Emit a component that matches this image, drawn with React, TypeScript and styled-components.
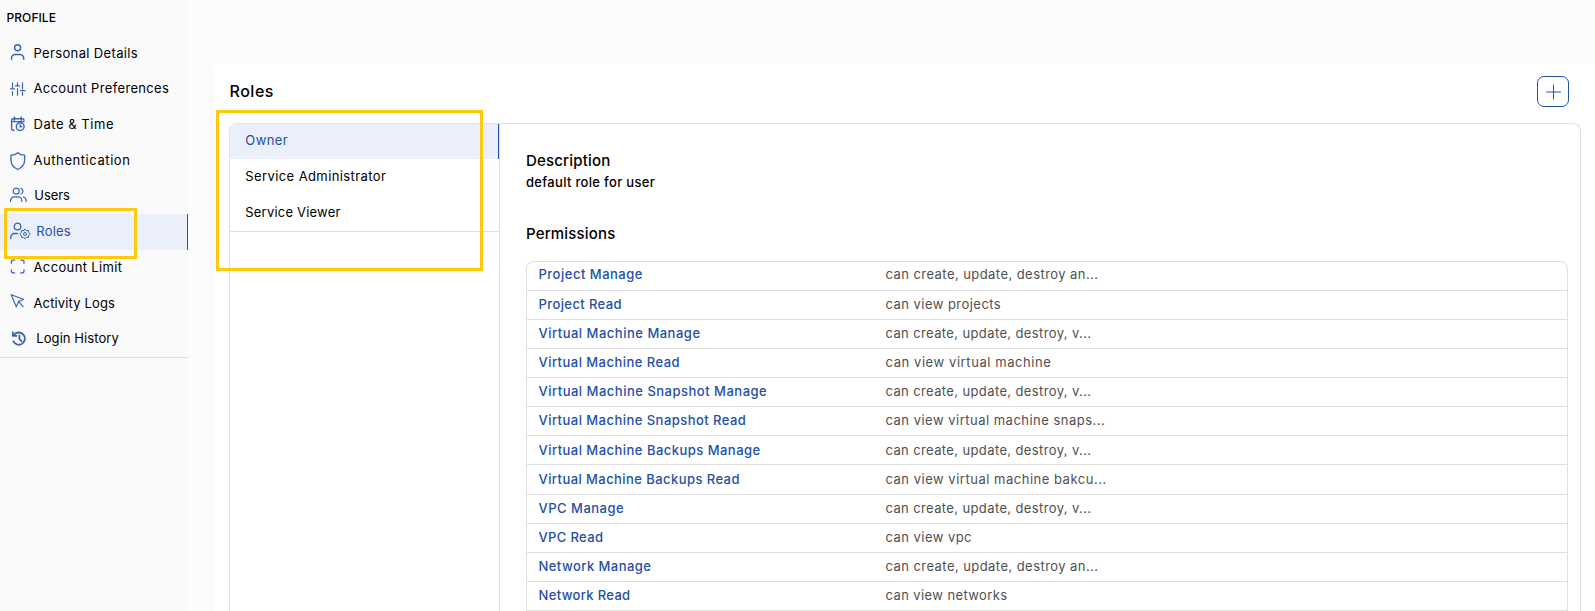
import React from "react";
import styled, { createGlobalStyle, css } from "styled-components";

const BLUE = "#2350a9";
const LINE = "#e0e0e1";
const TINT = "#eaeff9";

const GlobalStyle = createGlobalStyle`
  * { box-sizing: border-box; }
  body {
    margin: 0;
    overflow: hidden;
    background: #fbfcfe;
    color: #000;
    font-family: Inter, "Liberation Sans", sans-serif;
    font-size: 13px;
  }
`;

const Page = styled.div`
  position: relative;
  display: flex;
  height: 611px;
  overflow: hidden;
`;

const Sidebar = styled.nav`
  flex: 0 0 188px;
  background: #fafafa;
`;

const Heading = styled.h2`
  margin: 0;
  height: 35.6px;
  padding-left: 6.5px;
  font-size: 12px;
  font-weight: 500;
  line-height: 35px;
  letter-spacing: 0.07px;
`;

const Menu = styled.div`
  border-bottom: 1px solid ${LINE};
`;

const Label = styled.span<{ $track: number }>`
  white-space: nowrap;
  letter-spacing: ${(p) => p.$track}px;
`;

const MenuItem = styled.a<{ $active?: boolean; $indent: number }>`
  display: flex;
  align-items: center;
  gap: ${(p) => p.$indent}px;
  height: 35.7px;
  padding-left: 9px;
  ${Label} {
    padding-bottom: 1.4px;
  }
  ${(p) =>
    p.$active &&
    css`
      background: ${TINT};
      border-right: 1px solid ${BLUE};
      color: ${BLUE};
    `}
`;

const Icon = styled.svg<{ $weight?: number }>`
  flex: none;
  width: 22px;
  height: 20px;
  overflow: visible;
  fill: none;
  stroke: #3a63b5;
  stroke-width: ${(p) => p.$weight ?? 1.2};
  stroke-linecap: round;
  stroke-linejoin: round;
`;

const Card = styled.main`
  flex: 1;
  display: flex;
  flex-direction: column;
  margin: 64px 0 0 26px;
  padding: 12px 14px 0 15px;
  background: #fff;
  border-top-left-radius: 4px;
`;

const CardHeader = styled.header`
  display: flex;
  justify-content: space-between;
  align-items: center;
  height: 31px;
  margin-bottom: 16px;
  padding-right: 12px;
`;

const Title = styled.h1`
  margin: 0;
  padding: 0 0 2px 0.5px;
  font-size: 16px;
  font-weight: 500;
  letter-spacing: 0.53px;
`;

const AddButton = styled.button`
  display: grid;
  place-items: center;
  width: 32px;
  height: 31px;
  padding: 0;
  background: #fff;
  border: 1px solid ${BLUE};
  border-radius: 7px;
`;

const Panel = styled.section`
  flex: 1;
  display: flex;
  border: 1px solid ${LINE};
  border-bottom: 0;
  border-radius: 8px 8px 0 0;
`;

const RoleColumn = styled.div`
  flex: 0 0 270px;
  border-right: 1px solid ${LINE};
`;

const RoleList = styled.div`
  border-bottom: 1px solid ${LINE};
`;

const RoleItem = styled.div<{ $active?: boolean }>`
  display: flex;
  align-items: center;
  height: 36px;
  padding: 0 0 2px 15.3px;
  ${(p) =>
    p.$active &&
    css`
      height: 35px;
      padding-bottom: 3px;
      background: ${TINT};
      border-right: 1px solid ${BLUE};
      border-top-left-radius: 5px;
      color: ${BLUE};
    `}
`;

const Details = styled.div`
  flex: 1;
  padding: 26px 12px 0 26px;
`;

const SectionTitle = styled.h3`
  margin: 0;
  font-size: 15px;
  font-weight: 500;
  line-height: 22px;
  letter-spacing: 0.18px;
`;

const Summary = styled.p`
  margin: 0 0 31px;
  font-weight: 500;
  line-height: 20px;
  letter-spacing: 0.32px;
`;

const Table = styled.div`
  margin-top: 15.5px;
  border: 1px solid ${LINE};
  border-bottom: 0;
  border-radius: 8px 8px 0 0;
`;

const Row = styled.div`
  display: grid;
  grid-template-columns: 347px 1fr;
  align-items: center;
  height: 29.13px;
  padding: 0 0 1.5px 11.5px;
  border-bottom: 1px solid ${LINE};
  &:first-child {
    padding-bottom: 3.2px;
  }
`;

const Name = styled(Label)`
  color: ${BLUE};
  font-weight: 500;
`;

const Info = styled(Label)`
  color: #505050;
`;

const Highlight = styled.div<{ $x: number; $y: number; $w: number; $h: number }>`
  position: absolute;
  left: ${(p) => p.$x}px;
  top: ${(p) => p.$y}px;
  width: ${(p) => p.$w}px;
  height: ${(p) => p.$h}px;
  border: 3px solid #ffc90e;
  pointer-events: none;
`;

const icons = {
  person: (
    <Icon $weight={1.5}>
      <circle cx="8.6" cy="4.8" r="3" />
      <path d="M2.5 16.2v-1a3.8 3.8 0 0 1 3.8-3.8h4.6a3.8 3.8 0 0 1 3.8 3.8v1" />
    </Icon>
  ),
  sliders: (
    <Icon>
      <path d="M3.5 3.8v5M3.5 12.5v3.7M8.5 3.8v2.5M8.5 9.6v6.6M13.5 3.8v6.3M13.5 13.3v2.9M1.5 9.8h4M6.5 6.9h4M11.5 11.6h4.5" />
    </Icon>
  ),
  calendar: (
    <Icon $weight={1.4}>
      <path d="M5 15.2H4A1.4 1.4 0 0 1 2.6 13.8V5.2A1.5 1.5 0 0 1 4.1 3.7h9.4A1.5 1.5 0 0 1 15 5.2M2.6 6.6H15M5.4 2v3.2M12.2 2v3.2" />
      <circle cx="11.2" cy="11.6" r="3.9" />
      <path d="M11.2 9.8v2h1.6" />
    </Icon>
  ),
  shield: (
    <Icon $weight={1.3}>
      <path d="M8.8 1.7C7.1 3.3 5 4.1 2 4.2v5.1c0 4.4 2.5 7.4 6.8 9.2 4.3-1.8 6.8-4.8 6.8-9.2V4.2c-3-.1-5.1-.9-6.8-2.5z" />
    </Icon>
  ),
  users: (
    <Icon>
      <circle cx="7.2" cy="5.2" r="3" />
      <path d="M1.6 15.6v-1a3.7 3.7 0 0 1 3.7-3.7h3.8a3.7 3.7 0 0 1 3.7 3.7v1M12 2.4a3 3 0 0 1 0 5.6M14.3 11a3.7 3.7 0 0 1 2.8 3.6v1" />
    </Icon>
  ),
  roles: (
    <Icon $weight={1.3}>
      <circle cx="8.5" cy="4.5" r="3.3" />
      <path d="M1.7 16.5v-1a4 4 0 0 1 4-4h2.8" />
      <path
        strokeWidth="1"
        d="M16 7.4l1.5 1.2 1.9-.2.3 1.9 1.5 1.7-1.5 1.7-.3 1.9-1.9-.2-1.5 1.2-1.5-1.2-1.9.2-.3-1.9-1.5-1.7 1.5-1.7.3-1.9 1.9.2z"
      />
      <circle cx="16" cy="12" r="1.5" strokeWidth="1" />
    </Icon>
  ),
  corners: (
    <Icon $weight={1.3}>
      <path d="M2.4 5.2V3.7a1.6 1.6 0 0 1 1.6-1.6h1.6M11.8 2.1h1.6A1.6 1.6 0 0 1 15 3.7v1.5M15 11.8v1.5a1.6 1.6 0 0 1-1.6 1.6h-1.6M5.6 14.9H4a1.6 1.6 0 0 1-1.6-1.6v-1.5" />
    </Icon>
  ),
  cursor: (
    <Icon>
      <path d="M2.2 1.7l12.4 4.6-5.1 2.3-2.1 5.3zM9.5 8.6l4.7 5" />
    </Icon>
  ),
  history: (
    <Icon $weight={1.8}>
      <path d="M4.9 6A6.1 6.1 0 1 1 4.3 12.2M3.8 3.1v3.7h3.7M10.4 6.4v3.6l2.2 2.1" />
    </Icon>
  ),
};

type MenuEntry = { icon: keyof typeof icons; text: string; track: number; indent?: number };

const menu: MenuEntry[] = [
  { icon: "person", text: "Personal Details", track: 0.35 },
  { icon: "sliders", text: "Account Preferences", track: 0.34 },
  { icon: "calendar", text: "Date & Time", track: 0.54 },
  { icon: "shield", text: "Authentication", track: 0.57 },
  { icon: "users", text: "Users", track: -0.07, indent: 3.3 },
  { icon: "roles", text: "Roles", track: 0.19, indent: 5.3 },
  { icon: "corners", text: "Account Limit", track: 0.37 },
  { icon: "cursor", text: "Activity Logs", track: 0.14 },
  { icon: "history", text: "Login History", track: 0.07, indent: 5.3 },
];

const roles: [string, number][] = [
  ["Owner", 0.4],
  ["Service Administrator", 0.4],
  ["Service Viewer", 0.2],
];

const permissions: [string, number, string, number][] = [
  ["Project Manage", 0.5, "can create, update, destroy an...", 0.44],
  ["Project Read", 0.4, "can view projects", 0.46],
  ["Virtual Machine Manage", 0.5, "can create, update, destroy, v...", 0.38],
  ["Virtual Machine Read", 0.46, "can view virtual machine", 0.58],
  ["Virtual Machine Snapshot Manage", 0.5, "can create, update, destroy, v...", 0.38],
  ["Virtual Machine Snapshot Read", 0.46, "can view virtual machine snaps...", 0.49],
  ["Virtual Machine Backups Manage", 0.47, "can create, update, destroy, v...", 0.38],
  ["Virtual Machine Backups Read", 0.43, "can view virtual machine bakcu...", 0.51],
  ["VPC Manage", 0.5, "can create, update, destroy, v...", 0.38],
  ["VPC Read", 0.36, "can view vpc", 0.46],
  ["Network Manage", 0.44, "can create, update, destroy an...", 0.44],
  ["Network Read", 0.34, "can view networks", 0.4],
];

export default function App() {
  return (
    <>
      <GlobalStyle />
      <Page>
        <Sidebar>
          <Heading>PROFILE</Heading>
          <Menu>
            {menu.map((m) => (
              <MenuItem key={m.text} $active={m.text === "Roles"} $indent={m.indent ?? 2.5}>
                {icons[m.icon]}
                <Label $track={m.track}>{m.text}</Label>
              </MenuItem>
            ))}
          </Menu>
        </Sidebar>
        <Card>
          <CardHeader>
            <Title>Roles</Title>
            <AddButton aria-label="Add role">
              <svg width="16" height="16" stroke={BLUE} strokeWidth="1" strokeLinecap="round">
                <path d="M1.5 8h14M8.5 1v14" />
              </svg>
            </AddButton>
          </CardHeader>
          <Panel>
            <RoleColumn>
              <RoleList>
                {roles.map(([text, track], i) => (
                  <RoleItem key={text} $active={i === 0}>
                    <Label $track={track}>{text}</Label>
                  </RoleItem>
                ))}
              </RoleList>
            </RoleColumn>
            <Details>
              <SectionTitle>Description</SectionTitle>
              <Summary>default role for user</Summary>
              <SectionTitle>Permissions</SectionTitle>
              <Table>
                {permissions.map(([name, nameTrack, info, infoTrack]) => (
                  <Row key={name}>
                    <Name $track={nameTrack}>{name}</Name>
                    <Info $track={infoTrack}>{info}</Info>
                  </Row>
                ))}
              </Table>
            </Details>
          </Panel>
        </Card>
        <Highlight $x={4} $y={208} $w={133} $h={51} />
        <Highlight $x={216} $y={110} $w={267} $h={161} />
      </Page>
    </>
  );
}
